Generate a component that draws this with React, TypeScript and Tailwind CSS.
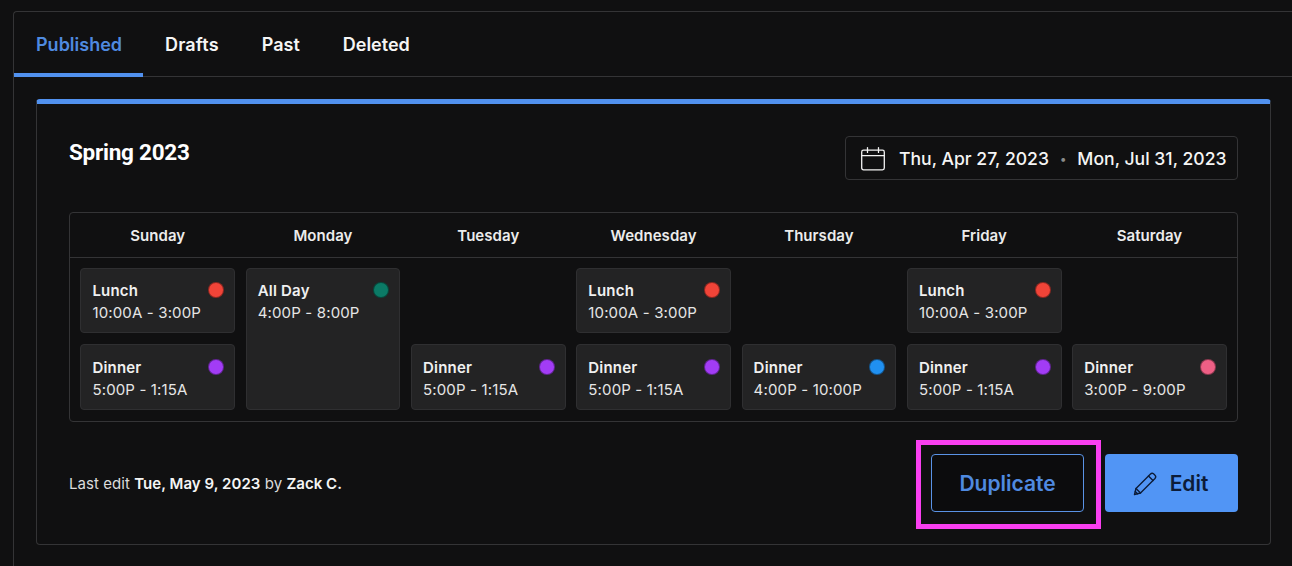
import React from "react";

type Shift = { label: string; time: string; dot: string; col: string; row: string };

const days = ["Sunday", "Monday", "Tuesday", "Wednesday", "Thursday", "Friday", "Saturday"];

const shifts: Shift[] = [
  { label: "Lunch", time: "10:00A - 3:00P", dot: "bg-[#f04438]", col: "col-start-1", row: "row-start-1 pt-[11px]" },
  { label: "Dinner", time: "5:00P - 1:15A", dot: "bg-[#a23cf5]", col: "col-start-1", row: "row-start-2 pt-[12px]" },
  { label: "All Day", time: "4:00P - 8:00P", dot: "bg-[#0b7a66]", col: "col-start-2", row: "row-start-1 row-span-2 pt-[11px]" },
  { label: "Dinner", time: "5:00P - 1:15A", dot: "bg-[#a23cf5]", col: "col-start-3", row: "row-start-2 pt-[12px]" },
  { label: "Lunch", time: "10:00A - 3:00P", dot: "bg-[#f04438]", col: "col-start-4", row: "row-start-1 pt-[11px]" },
  { label: "Dinner", time: "5:00P - 1:15A", dot: "bg-[#a23cf5]", col: "col-start-4", row: "row-start-2 pt-[12px]" },
  { label: "Dinner", time: "4:00P - 10:00P", dot: "bg-[#2090f0]", col: "col-start-5", row: "row-start-2 pt-[12px]" },
  { label: "Lunch", time: "10:00A - 3:00P", dot: "bg-[#f04438]", col: "col-start-6", row: "row-start-1 pt-[11px]" },
  { label: "Dinner", time: "5:00P - 1:15A", dot: "bg-[#a23cf5]", col: "col-start-6", row: "row-start-2 pt-[12px]" },
  { label: "Dinner", time: "3:00P - 9:00P", dot: "bg-[#ee5f85]", col: "col-start-7", row: "row-start-2 pt-[12px]" },
];

function CalendarIcon() {
  return (
    <svg width="26" height="26" viewBox="0 0 26 26" fill="none" stroke="#f2f2f2" strokeWidth="1.3" strokeLinecap="round" strokeLinejoin="round">
      <rect x="1.7" y="4.2" width="22.6" height="19.6" rx="1.8" />
      <path d="M1.7 9.6H24.3M7.5 1.6V6.4M18.5 1.6V6.4" />
    </svg>
  );
}

function PencilIcon() {
  return (
    <svg width="24" height="24" viewBox="0 0 24 24" fill="none" stroke="#0c1c38" strokeWidth="1.4" strokeLinecap="round" strokeLinejoin="round">
      <path d="M1.5 22.5 L3 16.5 L17.5 2 C18.5 1 20 1 21.3 2.4 L21.8 3 C23 4.2 23 5.4 22 6.5 L7.5 21 Z" />
      <path d="M3 16.5 L7.5 21 M15.5 4 L20 8.5 M2.3 19.6 L4.5 21.8" />
    </svg>
  );
}

export default function App() {
  return (
    <div className="h-[566px] overflow-hidden bg-[#101011] pl-[13px] pt-[11px] font-['Inter',sans-serif] text-[#f5f5f5]">
      <div className="min-h-[600px] rounded-tl-[4px] border-l border-t border-[#343436]">
        <div className="flex h-[65px] border-b border-[#343436] text-[18px] font-semibold">
          <div className="flex h-[65px] items-center border-b-4 border-[#5191ef] pl-[22px] pr-[21px] pt-[4px] text-[#4f8ae0]">Published</div>
          <div className="flex h-[65px] items-center pl-[22px] pr-[21px] tracking-[0.15px]">Drafts</div>
          <div className="flex h-[65px] items-center pl-[22px] pr-[21px]">Past</div>
          <div className="flex h-[65px] items-center px-[22px]">Deleted</div>
        </div>

        <div className="ml-[22px] mt-[22px] h-[446px] w-[1235px] rounded-[4px] border-x border-b border-t-[5px] border-x-[#343436] border-b-[#343436] border-t-[#5191ef] px-[32px]">
          <div className="flex items-start justify-between pt-[32px]">
            <h2 className="mt-[1px] font-['Roboto',sans-serif] text-[22.5px] font-bold leading-[30px] tracking-[-0.25px] text-white">Spring 2023</h2>
            <div className="flex h-[44px] w-[393px] items-center rounded-[4px] border border-[#343436] pl-[14px] pt-[1px] text-[17.6px] font-medium">
              <CalendarIcon />
              <span className="ml-[13px] pt-[1px]">Thu, Apr 27, 2023</span>
              <span className="ml-[11px] mr-[11px] text-[12px] text-[#8a8a8a]">•</span>
              <span className="pt-[1px]">Mon, Jul 31, 2023</span>
            </div>
          </div>

          <div className="mt-[32px] h-[210px] rounded-[4px] border border-[#343436]">
            <div className="grid h-[45px] grid-cols-7 gap-x-[10.7px] border-b border-[#343436] pl-[10.4px] pr-[10.2px] pt-[2px] text-[15px] font-semibold">
              {days.map((d) => (
                <div key={d} className="flex items-center justify-center tracking-[0.05px] text-[#ececec]">{d}</div>
              ))}
            </div>
            <div className="grid grid-cols-7 grid-rows-[65px_66px] gap-x-[10.7px] gap-y-[11px] pl-[10.4px] pr-[10.2px] pt-[10px]">
              {shifts.map((s, i) => (
                <div key={i} className={`${s.col} ${s.row} rounded-[4px] border border-[#2f2f31] bg-[#232324] pl-[11px] pr-[10px]`}>
                  <div className="flex items-start justify-between">
                    <span className="text-[15px] font-semibold leading-[22px] tracking-[0.2px] text-[#f0f0f0]">{s.label}</span>
                    <span className={`${s.dot} mt-[2px] h-[16px] w-[16px] rounded-full border border-black/40`} />
                  </div>
                  <div className="text-[15px] leading-[21px] tracking-[0.15px] text-[#e6e6e6]">{s.time}</div>
                </div>
              ))}
            </div>
          </div>

          <div className="mt-[32px] flex items-center justify-between">
            <div className="pt-[2px] text-[15px] tracking-[0.05px] text-[#dcdcdc]">
              Last edit <span className="font-semibold text-[#f5f5f5]">Tue, May 9, 2023</span> by <span className="font-semibold text-[#f5f5f5]">Zack C.</span>
            </div>
            <div className="flex gap-[21px]">
              <div className="relative">
                <button className="h-[58px] w-[153px] rounded-[4px] border border-[#5a93e6] bg-[#0c0c0d] pt-[2px] text-[21px] font-semibold text-[#4f8ae0]">Duplicate</button>
                <div className="pointer-events-none absolute -bottom-[17px] -left-[15px] -right-[17px] -top-[14px] border-[5px] border-[#f93ff0]" />
              </div>
              <button className="flex h-[58px] w-[133px] items-center justify-center gap-[13px] rounded-[4px] bg-[#5195f5] pr-[2px] pt-[1px] text-[21px] font-semibold text-[#0c1c38]">
                <PencilIcon />
                Edit
              </button>
            </div>
          </div>
        </div>
      </div>
    </div>
  );
}
